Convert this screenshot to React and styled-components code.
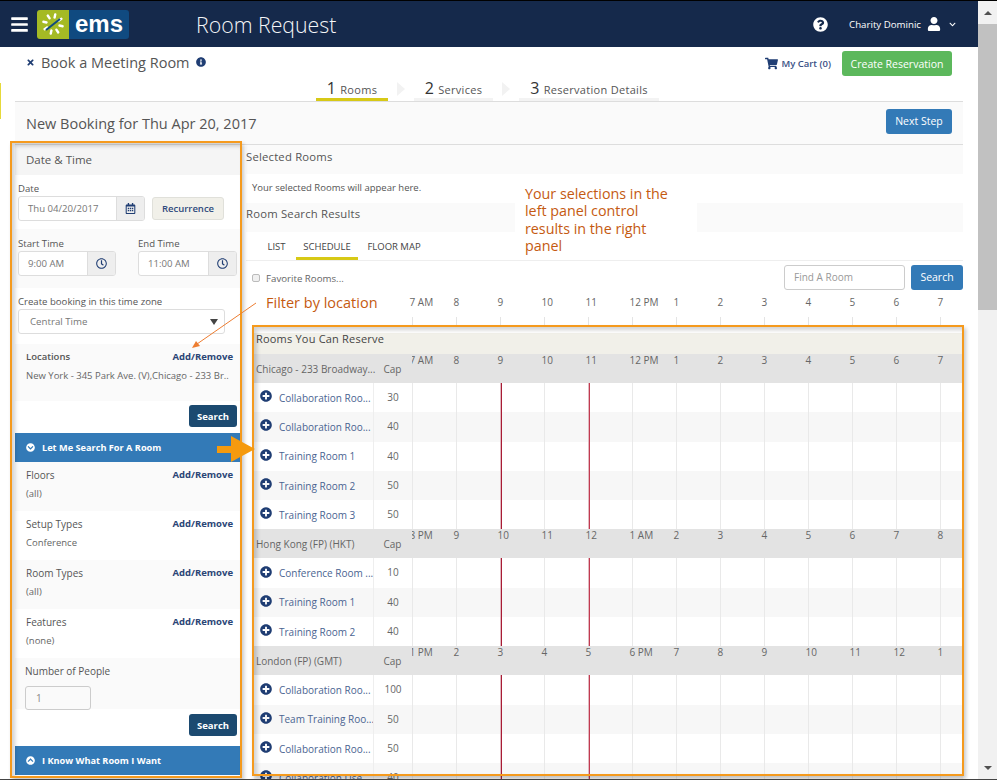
import React from 'react';
import styled, { createGlobalStyle } from 'styled-components';
import {
  FaBars, FaTimes, FaInfoCircle, FaShoppingCart, FaQuestionCircle, FaUser,
  FaChevronDown, FaRegCalendarAlt, FaRegClock, FaPlusCircle, FaChevronCircleDown, FaChevronCircleUp,
} from 'react-icons/fa';

const Global = createGlobalStyle`
  html, body { margin: 0; padding: 0; height: 100%; overflow: hidden; background: #fff; }
  * { box-sizing: border-box; }
  body { font-family: "Open Sans", "Liberation Sans", sans-serif; color: #555; font-size: 11px; }
`;

const Frame = styled.div`
  position: relative;
  display: flex;
  width: 997px;
  height: 780px;
  overflow: hidden;
  border-top: 1px solid #000;
  border-bottom: 1px solid #444;
`;
const Main = styled.div`
  width: 978px;
  flex: none;
  display: flex;
  flex-direction: column;
`;
const Scrollbar = styled.div`
  width: 19px;
  background: #f1f1f1;
  display: flex;
  flex-direction: column;
  align-items: center;
`;
const ScrollArrow = styled.div`
  height: 23px;
  flex: none;
  display: flex;
  align-items: center;
  justify-content: center;
  &::after {
    content: '';
    border-left: 4px solid transparent;
    border-right: 4px solid transparent;
    ${p => (p.$down ? 'border-top: 4px solid #505050;' : 'border-bottom: 4px solid #505050;')}
  }
`;
const ScrollThumb = styled.div`
  width: 100%;
  height: 286px;
  background: #c1c1c1;
  flex: none;
`;
const ScrollTrack = styled.div`
  flex: 1;
`;

const Navbar = styled.div`
  height: 46px;
  flex: none;
  background: #15294b;
  display: flex;
  align-items: center;
  padding-left: 10px;
  color: #fff;
`;
const Logo = styled.div`
  display: flex;
  width: 92px;
  height: 29px;
  margin-left: 8px;
  border-radius: 3px;
  overflow: hidden;
`;
const LogoMark = styled.div`
  width: 32px;
  background: #a5ba24;
  display: flex;
  align-items: center;
  justify-content: center;
`;
const LogoWord = styled.div`
  flex: 1;
  background: #104a80;
  color: #fff;
  font-size: 24px;
  font-weight: 700;
  line-height: 27px;
  text-align: center;
  font-family: "Liberation Sans", sans-serif;
`;
const AppTitle = styled.div`
  margin-left: 67px;
  font-size: 21.3px;
  font-weight: 300;
  color: #f4f6f8;
`;
const NavRight = styled.div`
  margin-left: auto;
  display: flex;
  align-items: center;
  padding-right: 22px;
`;
const UserName = styled.span`
  font-size: 9.7px;
  margin-left: 21px;
  margin-right: 6px;
`;

const TopRow = styled.div`
  height: 54px;
  flex: none;
  position: relative;
  display: flex;
  padding-left: 26px;
  padding-right: 26px;
`;
const PageTitle = styled.div`
  display: flex;
  align-items: center;
  height: 30px;
  font-size: 14.5px;
  color: #555;
  gap: 6px;
  svg { color: #1f3d73; }
`;
const CartArea = styled.div`
  margin-left: auto;
  display: flex;
  align-items: flex-start;
  gap: 11px;
  padding-top: 4px;
`;
const CartLink = styled.div`
  display: flex;
  align-items: center;
  height: 24px;
  gap: 3px;
  color: #3a5186;
  font-size: 9.5px;
  font-weight: 600;
  svg { color: #1f3d73; }
`;
const Button = styled.div`
  display: flex;
  align-items: center;
  justify-content: center;
  color: #fff;
  border-radius: 3px;
  font-size: ${p => p.$size || 10.5}px;
  font-weight: ${p => p.$bold ? 700 : 400};
  width: ${p => p.$w}px;
  height: ${p => p.$h}px;
  background: ${p => p.$bg};
  flex: none;
`;
const NextStep = styled(Button)`
  margin-bottom: 4px;
`;
const Steps = styled.div`
  position: absolute;
  left: 316px;
  bottom: 0;
  display: flex;
  align-items: flex-end;
`;
const Step = styled.div`
  height: 24px;
  width: ${p => p.$w}px;
  display: flex;
  align-items: baseline;
  justify-content: center;
  gap: 4px;
  font-size: 11px;
  letter-spacing: .3px;
  color: #555;
  border-bottom: 3px solid ${p => p.$active ? '#d7c916' : '#f3f3f3'};
  b { font-size: 16px; font-weight: 500; color: #333; }
`;
const StepArrow = styled.div`
  width: 0;
  height: 0;
  margin: 0 9px 5px 9px;
  border-top: 7px solid transparent;
  border-bottom: 7px solid transparent;
  border-left: 8px solid #f2f2f2;
`;

const Band = styled.div`
  height: 44px;
  flex: none;
  margin-left: 15px;
  margin-right: 15px;
  border-top: 1px solid #ddd;
  border-bottom: 1px solid #ddd;
  background: #fafafa;
  display: flex;
  align-items: center;
  justify-content: space-between;
  padding: 0 11px;
  font-size: 14.5px;
  color: #555;
`;

const Columns = styled.div`
  flex: 1;
  display: flex;
  gap: 6px;
  padding-left: 15px;
  padding-right: 15px;
  min-height: 0;
`;
const Sidebar = styled.div`
  width: 225px;
  flex: none;
  display: flex;
  flex-direction: column;
`;
const SideHead = styled.div`
  height: 30px;
  background: #f5f5f5;
  padding-left: 11px;
  line-height: 29px;
  font-size: 11.5px;
  color: #555;
`;
const Section = styled.div`
  height: ${p => p.$h}px;
  padding: ${p => p.$pad || '0 3px'};
  background: ${p => p.$alt ? '#fafafa' : '#fff'};
  flex: none;
`;
const Label = styled.div`
  font-size: ${p => p.$size || 9.6}px;
  line-height: 14px;
  color: #555;
`;
const Line = styled.div`
  display: flex;
  align-items: ${p => p.$align || 'center'};
  gap: ${p => p.$gap || 0}px;
`;
const InputGroup = styled.div`
  display: flex;
  width: ${p => p.$w}px;
  height: 25px;
  border: 1px solid #ddd;
  border-radius: 3px;
  overflow: hidden;
  background: #fff;
  flex: none;
`;
const InputText = styled.div`
  flex: 1;
  padding-left: 9px;
  line-height: 23px;
  font-size: 9.6px;
  color: #777;
`;
const Addon = styled.div`
  width: 28px;
  flex: none;
  background: #eee;
  border-left: 1px solid #ddd;
  display: flex;
  align-items: center;
  justify-content: center;
  color: #1f3d73;
  font-size: 11px;
`;
const Recurrence = styled.div`
  width: 72px;
  height: 23px;
  margin-top: 1px;
  background: #f1f0e9;
  border: 1px solid #e0e0da;
  border-radius: 3px;
  color: #2f4a7c;
  font-size: 9.5px;
  font-weight: 600;
  display: flex;
  align-items: center;
  justify-content: center;
`;
const Field = styled.div`
  display: flex;
  flex-direction: column;
  width: ${p => p.$w}px;
`;
const Select = styled.div`
  width: 207px;
  height: 25px;
  border: 1px solid #ddd;
  border-radius: 3px;
  padding-left: 11px;
  display: flex;
  align-items: center;
  justify-content: space-between;
  padding-right: 6px;
  font-size: 9.7px;
  color: #777;
  &::after {
    content: '';
    border-left: 4px solid transparent;
    border-right: 4px solid transparent;
    border-top: 6px solid #444;
  }
`;
const FilterHead = styled.div`
  display: flex;
  justify-content: space-between;
  font-size: ${p => p.$bold ? 9.5 : 10}px;
  line-height: 14px;
  font-weight: ${p => p.$bold ? 600 : 400};
  color: #555;
`;
const AddRemove = styled.span`
  font-weight: 700;
  font-size: 9.5px;
  color: #2b4576;
`;
const FilterValue = styled.div`
  margin-top: 5px;
  font-size: 9.5px;
  line-height: 14px;
  color: #666;
  white-space: nowrap;
`;
const SearchRow = styled.div`
  height: ${p => p.$h}px;
  flex: none;
  display: flex;
  justify-content: flex-end;
  padding: ${p => p.$top}px 3px 0 0;
`;
const Accordion = styled.div`
  height: 29px;
  flex: none;
  background: #337ab7;
  display: flex;
  align-items: center;
  gap: 7px;
  padding-left: 11px;
  color: #fff;
  font-size: 9.2px;
  font-weight: 700;
`;
const PeopleInput = styled.div`
  width: 66px;
  height: 24px;
  border: 1px solid #ccc;
  border-radius: 3px;
  padding-left: 10px;
  margin-top: 8px;
  line-height: 22px;
  font-size: 10px;
  color: #888;
`;

const Results = styled.div`
  flex: 1;
  min-width: 0;
  display: flex;
  flex-direction: column;
`;
const ResultBand = styled.div`
  height: 29px;
  flex: none;
  background: #fafafa;
  line-height: ${p => p.$lh}px;
  font-size: 11.3px;
  letter-spacing: .2px;
  color: #555;
`;
const Hint = styled.div`
  height: 29px;
  padding-left: 6px;
  line-height: 28px;
  font-size: 9.5px;
  color: #555;
  flex: none;
`;
const Tabs = styled.div`
  height: 29px;
  flex: none;
  display: flex;
  align-items: flex-end;
  border-bottom: 1px solid #eee;
  padding-left: 11px;
`;
const Tab = styled.div`
  height: 28px;
  width: ${p => p.$w}px;
  text-align: center;
  font-size: 9.5px;
  line-height: 29px;
  color: #444;
  border-bottom: 3px solid ${p => p.$active ? '#d7c916' : 'transparent'};
`;
const FilterRow = styled.div`
  height: 34px;
  flex: none;
  display: flex;
  align-items: center;
  padding: 0 0 2px 6px;
  gap: 6px;
  font-size: 9.7px;
  color: #666;
`;
const FavoriteLabel = styled.span`
  padding-top: 2px;
`;
const Check = styled.div`
  width: 8px;
  height: 8px;
  margin-top: 2px;
  border: 1px solid #bbb;
  border-radius: 2px;
  background: #f0f0f0;
  flex: none;
`;
const FindInput = styled.div`
  margin-left: auto;
  width: 121px;
  height: 25px;
  border: 1px solid #ccc;
  border-radius: 3px;
  padding-left: 9px;
  line-height: 23px;
  font-size: 10px;
  color: #999;
`;
const AxisRow = styled.div`
  height: 30px;
  flex: none;
  display: flex;
  flex-direction: column;
  padding-left: 166px;
`;
const Hours = styled.div`
  display: flex;
  margin-left: -2.5px;
  height: ${p => p.$h}px;
`;
const Hour = styled.div`
  width: 44px;
  flex: none;
  font-size: 10px;
  line-height: 14px;
  white-space: nowrap;
  color: #666;
`;
const Ticks = styled.div`
  display: flex;
  height: 8px;
  margin-top: auto;
`;
const Tick = styled.div`
  width: 44px;
  flex: none;
  border-left: 1px solid #e4e4e4;
`;
const ReserveTable = styled.div`
  flex: 1;
  min-height: 0;
  overflow: hidden;
  padding-top: 8px;
  padding-left: 8px;
  display: flex;
  flex-direction: column;
`;
const ReserveHead = styled.div`
  height: 21px;
  flex: none;
  background: #f1f0e9;
  font-size: 11px;
  line-height: 11px;
  letter-spacing: .2px;
  color: #444;
  padding-left: 2px;
`;
const GroupRow = styled.div`
  height: ${p => p.$h}px;
  flex: none;
  display: flex;
  background: #e3e3e3;
`;
const GroupName = styled.div`
  width: 119px;
  flex: none;
  line-height: 30px;
  padding-left: 2px;
  font-size: 10px;
  color: #666;
  white-space: nowrap;
`;
const CapCell = styled.div`
  width: 39px;
  flex: none;
  text-align: center;
  font-size: 10px;
  color: #666;
  line-height: ${p => p.$lh}px;
  ${p => p.$line && 'border-left: 1px solid #eee;'}
`;
const GroupHours = styled.div`
  flex: 1;
  min-width: 0;
  overflow: hidden;
  margin-top: -1px;
`;
const RoomRow = styled.div`
  height: ${p => p.$h}px;
  flex: none;
  display: flex;
  background: ${p => p.$alt ? '#f7f7f7' : '#fff'};
`;
const RoomName = styled.div`
  width: 119px;
  flex: none;
  display: flex;
  align-items: center;
  padding-left: 6px;
  gap: 7px;
  font-size: 10px;
  color: #4a6491;
  white-space: nowrap;
  svg { color: #1f3d73; flex: none; margin-top: -3px; }
`;
const Lane = styled.div`
  flex: 1;
  min-width: 0;
  display: flex;
  overflow: hidden;
`;
const LaneCell = styled.div`
  width: 44px;
  flex: none;
  border-left: 1px solid ${p => (p.$mark ? '#e2b9c0' : '#e9e9e9')};
  ${p => p.$mark && `&::before { content: ''; display: block; width: 1px; height: 100%; background: ${p.$mark}; }`}
`;

const OrangeBox = styled.div`
  position: absolute;
  left: ${p => p.$x}px;
  top: ${p => p.$y}px;
  width: ${p => p.$w}px;
  height: ${p => p.$h}px;
  border: 2px solid #f59a1d;
  box-shadow: 2px 3px 4px rgba(0, 0, 0, .22), inset 3px 3px 4px rgba(0, 0, 0, .18);
  pointer-events: none;
`;
const Note = styled.div`
  position: absolute;
  left: ${p => p.$x}px;
  top: ${p => p.$y}px;
  width: ${p => p.$w}px;
  background: ${p => p.$bg || 'transparent'};
  padding: ${p => p.$pad || 0};
  color: #c55a11;
  font-size: ${p => p.$size}px;
  line-height: 17.3px;
`;
const Overlay = styled.svg`
  position: absolute;
  left: 0;
  top: -1px;
  width: 997px;
  height: 780px;
  pointer-events: none;
`;

const sunRays = [0, 45, 90, 135, 180, 225, 270, 315];

const LogoSun = () => (
  <svg width="26" height="26" viewBox="0 0 26 26">
    {sunRays.map(a => (
      <rect key={a} x="12" y="2" width="2.4" height="5.5" rx="1" fill="#fff" transform={`rotate(${a + 12} 13 13)`} />
    ))}
    <path d="M6 19 L20 8" stroke="#104a80" strokeWidth="2" />
  </svg>
);

const Filter = ({ name, value, alt }) => (
  <Section $h={49} $alt={alt} $pad="6px 7px 0 11px">
    <FilterHead><span>{name}</span><AddRemove>Add/Remove</AddRemove></FilterHead>
    <FilterValue>{value}</FilterValue>
  </Section>
);

const marks = { 2: '#a81c35', 4: '#c23a50' };

const groups = [
  {
    name: 'Chicago - 233 Broadway...',
    hours: ['7 AM', '8', '9', '10', '11', '12 PM', '1', '2', '3', '4', '5', '6', '7'],
    rooms: [['Collaboration Roo...', 30], ['Collaboration Roo...', 40], ['Training Room 1', 40], ['Training Room 2', 50], ['Training Room 3', 50]],
  },
  {
    name: 'Hong Kong (FP) (HKT)',
    hours: ['8 PM', '9', '10', '11', '12', '1 AM', '2', '3', '4', '5', '6', '7', '8'],
    rooms: [['Conference Room ...', 10], ['Training Room 1', 40], ['Training Room 2', 40]],
  },
  {
    name: 'London (FP) (GMT)',
    hours: ['1 PM', '2', '3', '4', '5', '6 PM', '7', '8', '9', '10', '11', '12', '1'],
    rooms: [['Collaboration Roo...', 100], ['Team Training Roo...', 50], ['Collaboration Roo...', 50], ['Collaboration Use...', 40]],
  },
];

const HourRow = ({ hours, h }) => (
  <Hours $h={h}>
    {hours.map((t, i) => <Hour key={i}>{t}</Hour>)}
  </Hours>
);

const App = () => (
  <>
    <Global />
    <Frame>
      <Main>
        <Navbar>
          <FaBars size={19} />
          <Logo>
            <LogoMark><LogoSun /></LogoMark>
            <LogoWord>ems</LogoWord>
          </Logo>
          <AppTitle>Room Request</AppTitle>
          <NavRight>
            <FaQuestionCircle size={15} />
            <UserName>Charity Dominic</UserName>
            <FaUser size={14} />
            <FaChevronDown size={7} style={{ marginLeft: 8 }} />
          </NavRight>
        </Navbar>

        <TopRow>
          <PageTitle><FaTimes size={9} /> Book a Meeting Room <FaInfoCircle size={10} /></PageTitle>
          <CartArea>
            <CartLink><FaShoppingCart size={13} /> My Cart (0)</CartLink>
            <Button $w={110} $h={25} $bg="#5cb85c">Create Reservation</Button>
          </CartArea>
          <Steps>
            <Step $w={72} $active><b>1</b> Rooms</Step>
            <StepArrow />
            <Step $w={79}><b>2</b> Services</Step>
            <StepArrow />
            <Step $w={140}><b>3</b> Reservation Details</Step>
          </Steps>
        </TopRow>

        <Band>
          <span>New Booking for Thu Apr 20, 2017</span>
          <NextStep $w={66} $h={25} $bg="#337ab7">Next Step</NextStep>
        </Band>

        <Columns>
          <Sidebar>
            <SideHead>Date &amp; Time</SideHead>
            <Section $h={54} $pad="7px 3px 0">
              <Label>Date</Label>
              <Line $gap={7} $align="flex-start">
                <InputGroup $w={127}>
                  <InputText>Thu 04/20/2017</InputText>
                  <Addon><FaRegCalendarAlt /></Addon>
                </InputGroup>
                <Recurrence>Recurrence</Recurrence>
              </Line>
            </Section>
            <Section $h={59} $alt $pad="8px 3px 0">
              <Line $gap={22}>
                <Field $w={98}>
                  <Label>Start Time</Label>
                  <InputGroup $w={98}>
                    <InputText>9:00 AM</InputText>
                    <Addon><FaRegClock /></Addon>
                  </InputGroup>
                </Field>
                <Field $w={99}>
                  <Label>End Time</Label>
                  <InputGroup $w={99}>
                    <InputText>11:00 AM</InputText>
                    <Addon><FaRegClock /></Addon>
                  </InputGroup>
                </Field>
              </Line>
            </Section>
            <Section $h={56} $pad="7px 3px 0">
              <Label>Create booking in this time zone</Label>
              <Select>Central Time</Select>
            </Section>
            <Section $h={57} $alt $pad="6px 7px 0 11px">
              <FilterHead $bold><span>Locations</span><AddRemove>Add/Remove</AddRemove></FilterHead>
              <FilterValue>New York - 345 Park Ave. (V),Chicago - 233 Br..</FilterValue>
            </Section>
            <SearchRow $h={32} $top={4}><Button $w={48} $h={22} $size={9.5} $bold $bg="#1c4a70">Search</Button></SearchRow>
            <Accordion><FaChevronCircleDown size={9} /> Let Me Search For A Room</Accordion>
            <Filter name="Floors" value="(all)" alt />
            <Filter name="Setup Types" value="Conference" />
            <Filter name="Room Types" value="(all)" alt />
            <Filter name="Features" value="(none)" />
            <Section $h={51} $alt $pad="6px 7px 0 10px">
              <Label $size={10}>Number of People</Label>
              <PeopleInput>1</PeopleInput>
            </Section>
            <SearchRow $h={37} $top={5}><Button $w={48} $h={22} $size={9.5} $bold $bg="#1c4a70">Search</Button></SearchRow>
            <Accordion><FaChevronCircleUp size={9} /> I Know What Room I Want</Accordion>
          </Sidebar>

          <Results>
            <ResultBand $lh={24}>Selected Rooms</ResultBand>
            <Hint>Your selected Rooms will appear here.</Hint>
            <ResultBand $lh={22}>Room Search Results</ResultBand>
            <Tabs>
              <Tab $w={39}>LIST</Tab>
              <Tab $w={62} $active>SCHEDULE</Tab>
              <Tab $w={72}>FLOOR MAP</Tab>
            </Tabs>
            <FilterRow>
              <Check />
              <FavoriteLabel>Favorite Rooms...</FavoriteLabel>
              <FindInput>Find A Room</FindInput>
              <Button $w={52} $h={25} $bg="#337ab7">Search</Button>
            </FilterRow>
            <AxisRow>
              <HourRow hours={groups[0].hours} h={14} />
              <Ticks>{groups[0].hours.map((t, i) => <Tick key={i} />)}</Ticks>
            </AxisRow>
            <ReserveTable>
              <ReserveHead>Rooms You Can Reserve</ReserveHead>
              {groups.map(g => (
                <React.Fragment key={g.name}>
                  <GroupRow $h={29}>
                    <GroupName>{g.name}</GroupName>
                    <CapCell $lh={30}>Cap</CapCell>
                    <GroupHours><HourRow hours={g.hours} h={30} /></GroupHours>
                  </GroupRow>
                  {g.rooms.map(([name, cap], i) => (
                    <RoomRow key={i} $h={29.3} $alt={i % 2 === 1}>
                      <RoomName><FaPlusCircle size={12} /> {name}</RoomName>
                      <CapCell $lh={29} $line>{cap}</CapCell>
                      <Lane>
                        {g.hours.map((t, k) => <LaneCell key={k} $mark={marks[k]} />)}
                      </Lane>
                    </RoomRow>
                  ))}
                </React.Fragment>
              ))}
            </ReserveTable>
          </Results>
        </Columns>
      </Main>

      <Scrollbar>
        <ScrollArrow />
        <ScrollThumb />
        <ScrollTrack />
        <ScrollArrow $down />
      </Scrollbar>

      <OrangeBox $x={10} $y={140} $w={232} $h={637} />
      <OrangeBox $x={252} $y={324} $w={712} $h={451} />
      <Note $x={515} $y={180} $w={182} $size={14.3} $bg="#fff" $pad="4px 26px 0 10px">
        Your selections in the left panel control results in the right panel
      </Note>
      <Note $x={266} $y={293} $w={130} $size={14.5}>Filter by location</Note>
      <Overlay viewBox="0 0 997 780">
        <rect x="0" y="83" width="1" height="36" fill="#e6d93a" />
        <path d="M256 303 L197 344" stroke="#ed7d31" strokeWidth="1" />
        <path d="M192 348 L200 346 L196 341 Z" fill="#ed7d31" />
        <path d="M217 446 H231 V436 L255 449 L231 462 V453 H217 Z" fill="#f59a0e" />
      </Overlay>
    </Frame>
  </>
);

export default App;
